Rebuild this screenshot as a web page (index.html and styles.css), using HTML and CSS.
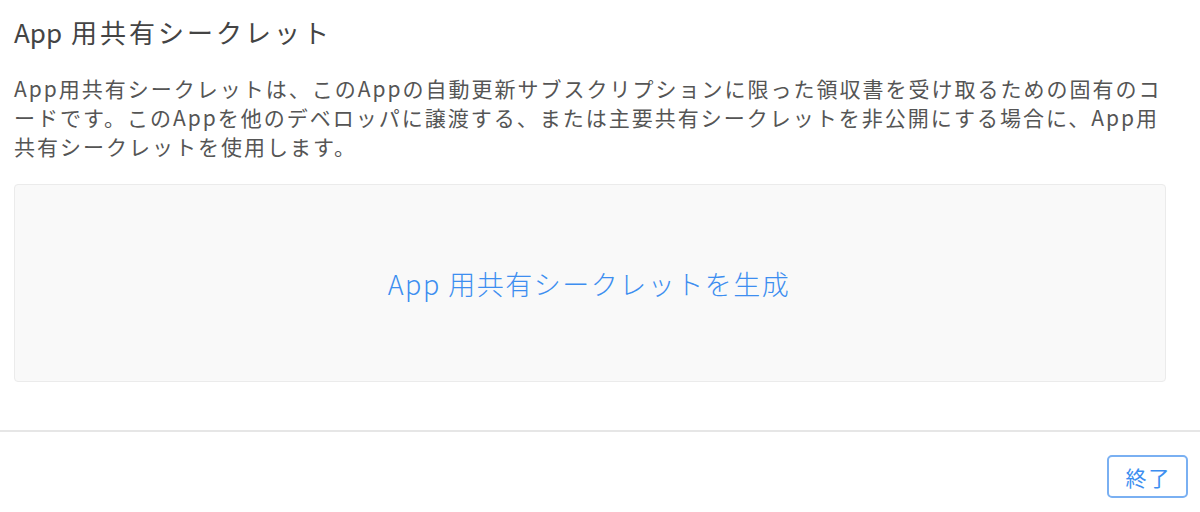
FILE: index.html
```html
<!DOCTYPE html>
<html lang="ja">
<head>
<meta charset="utf-8">
<link rel="stylesheet" href="styles.css">
</head>
<body>
<div class="dialog">
  <div class="content">
    <h1 class="title"><span class="latin">App</span> 用共有シークレット</h1>
    <p class="desc">App用共有シークレットは、このAppの自動更新サブスクリプションに限った領収書を受け取るための固有のコードです。このAppを他のデベロッパに譲渡する、または主要共有シークレットを非公開にする場合に、App用共有シークレットを使用します。</p>
    <div class="panel">
      <a class="generate">App 用共有シークレットを生成</a>
    </div>
  </div>
  <div class="footer">
    <button class="done">終了</button>
  </div>
</div>
</body>
</html>
```

FILE: styles.css
```css
html, body {
  margin: 0;
  padding: 0;
  background: #fff;
}
body {
  font-family: "Noto Sans CJK JP", "Noto Sans", sans-serif;
  color: #333;
}
.dialog {
  width: 1200px;
  height: 512px;
  display: flex;
  flex-direction: column;
}
.content {
  padding: 12px 34px 48px 14px;
  border-bottom: 2px solid #e6e6e6;
}
.title {
  margin: 0;
  font-size: 26px;
  font-weight: 400;
  line-height: 40px;
  color: #444;
  letter-spacing: 3px;
}
.title .latin {
  letter-spacing: 0;
}
.desc {
  margin: 22px 0 0;
  font-size: 21px;
  line-height: 29px;
  color: #555;
  letter-spacing: 2px;
  line-break: loose;
}
.panel {
  margin-top: 23px;
  height: 198px;
  box-sizing: border-box;
  border: 1px solid #ebebeb;
  border-radius: 4px;
  background: #f9f9f9;
  display: flex;
  align-items: center;
  justify-content: center;
}
.generate {
  font-size: 27px;
  font-weight: 300;
  color: #3d8ef0;
  letter-spacing: 1.5px;
  margin-right: 2px;
}
.footer {
  flex: 1;
  display: flex;
  justify-content: flex-end;
  align-items: flex-start;
  padding: 23px 12px 0 0;
}
.done {
  width: 81px;
  height: 43px;
  border: 2px solid #7ab0f2;
  border-radius: 5px;
  background: #fff;
  color: #3d8ef0;
  font-family: "Noto Sans CJK JP", sans-serif;
  font-size: 21px;
  letter-spacing: 2px;
  padding: 0 0 0 2px;
}
```
